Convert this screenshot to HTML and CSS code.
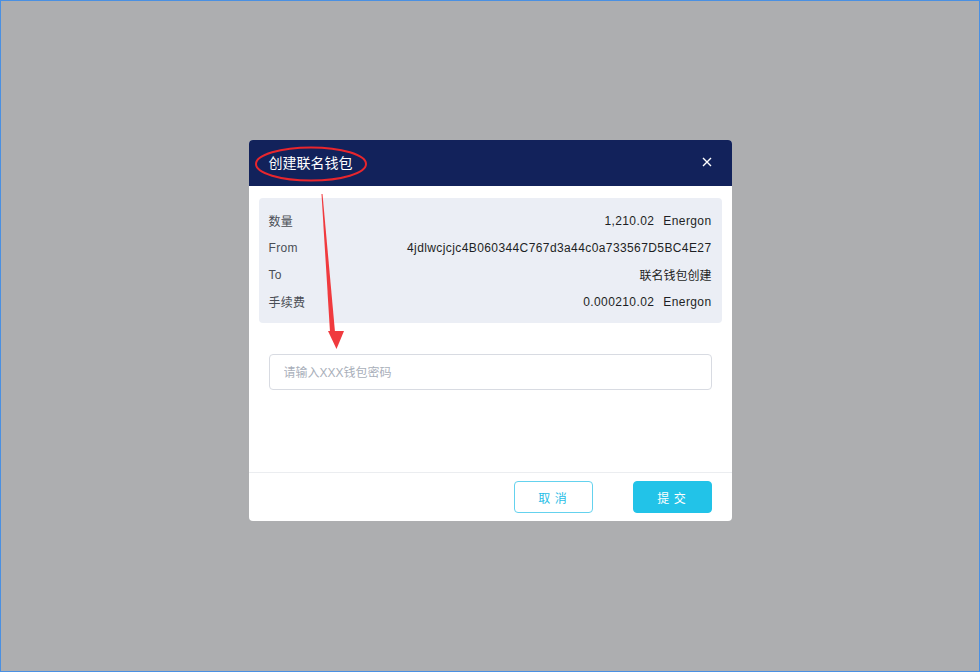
FILE: index.html
```html
<!DOCTYPE html>
<html lang="zh-CN">
<head>
<meta charset="utf-8">
<title>创建联名钱包</title>
<link rel="stylesheet" href="styles.css">
</head>
<body>
<div class="screen">
  <div class="modal">
    <div class="modal-header">
      <span class="modal-title">创建联名钱包</span>
      <span class="close" aria-label="close">
        <svg width="10" height="10" viewBox="0 0 10 10"><path d="M1 1L9 9M9 1L1 9" stroke="#fff" stroke-width="1.4" fill="none"/></svg>
      </span>
    </div>
    <div class="modal-body">
      <div class="info">
        <div class="row"><span class="label">数量</span><span class="value latin">1,210.02<span class="unit">Energon</span></span></div>
        <div class="row"><span class="label">From</span><span class="value latin">4jdlwcjcjc4B060344C767d3a44c0a733567D5BC4E27</span></div>
        <div class="row"><span class="label">To</span><span class="value">联名钱包创建</span></div>
        <div class="row"><span class="label">手续费</span><span class="value latin">0.000210.02<span class="unit">Energon</span></span></div>
      </div>
      <input class="password" type="password" placeholder="请输入XXX钱包密码">
    </div>
    <div class="modal-footer">
      <button class="btn btn-cancel">取 消</button>
      <button class="btn btn-submit">提 交</button>
    </div>
  </div>
  <svg class="annotation" width="980" height="672" viewBox="0 0 980 672">
    <ellipse cx="311" cy="164" rx="55" ry="16.5" fill="none" stroke="#e8262d" stroke-width="2"/>
    <polygon points="321.5,194 322.5,194 335,332 330,332" fill="#f03a3e"/>
    <polygon points="328,331 344,331 336.5,349" fill="#f03a3e"/>
  </svg>
</div>
</body>
</html>
```

FILE: styles.css
```css
* { box-sizing: border-box; }
html, body { margin: 0; padding: 0; }
body {
  font-family: "Liberation Sans", "Noto Sans CJK SC", sans-serif;
  background: #adaeb0;
}
.screen {
  position: relative;
  width: 980px;
  height: 672px;
  border: 1px solid #4a90e2;
  background: #adaeb0;
  display: flex;
  justify-content: center;
  align-items: flex-start;
  padding-top: 139px;
}
.modal {
  width: 483px;
  height: 381px;
  background: #fff;
  border-radius: 4px;
  overflow: hidden;
  display: flex;
  flex-direction: column;
}
.modal-header {
  height: 46px;
  background: #12225b;
  display: flex;
  align-items: center;
  justify-content: space-between;
  padding: 0 20px 0 20px;
}
.modal-title {
  color: #fff;
  font-size: 14px;
  font-family: "Noto Sans CJK SC", sans-serif;
  position: relative;
  top: -1px;
}
.close { display: flex; align-items: center; position: relative; top: -1px; }
.modal-body {
  flex: 1;
  padding: 12px 10px 0 10px;
}
.info {
  background: #ebeef5;
  border-radius: 4px;
  padding: 9px 10px 8px 10px;
}
.row {
  height: 27px;
  display: flex;
  align-items: center;
  justify-content: space-between;
  font-size: 12px;
}
.label {
  color: #4a4e56;
  letter-spacing: 0.3px;
}
.value { color: #1d1f24; }
.latin { letter-spacing: 0.4px; }
.unit { margin-left: 9px; }
.password {
  display: block;
  margin: 31px 10px 0 10px;
  width: 443px;
  height: 36px;
  border: 1px solid #d8dbe2;
  border-radius: 4px;
  padding: 2px 14px 0 14px;
  font-size: 12px;
  font-family: "Liberation Sans", "Noto Sans CJK SC", sans-serif;
  outline: none;
}
.password::placeholder { color: #a9afba; }
.modal-footer {
  height: 49px;
  border-top: 1px solid #ebedf0;
  display: flex;
  justify-content: flex-end;
  align-items: flex-start;
  padding: 8px 20px 0 0;
  gap: 40px;
}
.btn {
  width: 79px;
  height: 32px;
  border-radius: 4px;
  font-size: 12px;
  font-family: "Noto Sans CJK SC", sans-serif;
  letter-spacing: 1px;
  cursor: pointer;
  padding: 0;
}
.btn-cancel {
  background: #fff;
  border: 1px solid #64d2ee;
  color: #1fbde6;
}
.btn-submit {
  background: #22c3e8;
  border: 1px solid #22c3e8;
  color: #fff;
}
.annotation {
  position: absolute;
  left: -1px;
  top: -1px;
  pointer-events: none;
}
```
